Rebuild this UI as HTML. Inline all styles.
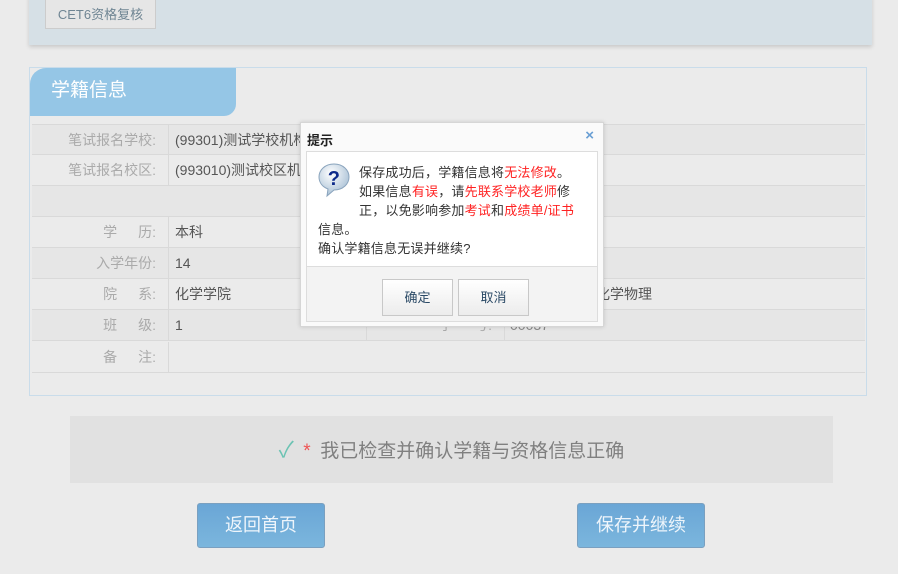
<!DOCTYPE html>
<html><head><meta charset="utf-8"><style>
*{margin:0;padding:0;box-sizing:border-box}
body{width:898px;height:574px;background:#ebebeb;font-family:"Liberation Sans","Noto Sans CJK SC",sans-serif;position:relative;overflow:hidden;color:#666}
.abs{position:absolute}
.top{left:29px;top:-5px;width:843px;height:50px;background:#d6e0e6;box-shadow:0 2px 4px rgba(0,0,0,.15)}
.cet{left:45px;top:0;width:111px;height:29px;border:1px solid #ccc;border-top:none;background:#e6e6e6;color:#6f8593;font-size:13px;line-height:29px;text-align:center}
.panel{left:29px;top:67px;width:838px;height:329px;border:1px solid #c9dcea;background:#ebebeb}
.tab{left:30px;top:68px;width:206px;height:48px;background:#95c6e6;border-radius:16px 0 12px 0;color:#fff;font-size:19px;line-height:46px;padding-left:21px}
.row{left:32px;width:833px;height:31px;border-bottom:1px solid #d9d9d9;font-size:14px;line-height:31px}
.lab{position:absolute;left:0;width:137px;height:100%;border-right:1px solid #d9d9d9;text-align:right;padding-right:12px;color:#aaa}
.val{position:absolute;left:143px;color:#555}
.mid{position:absolute;left:334px;width:139px;height:100%;border-left:1px solid #d9d9d9;border-right:1px solid #d9d9d9;text-align:right;padding-right:12px;color:#aaa}
.confirm{left:70px;top:416px;width:763px;height:67px;background:#e1e1e1;font-size:19px;line-height:67px;text-align:center;color:#808080}
.btn{top:503px;width:128px;height:45px;background:linear-gradient(#6aa6d6,#7bb6dd);border:1px solid #7aa0c0;border-radius:3px;color:#eef5fb;font-size:18px;line-height:43px;text-align:center}
.dlg{left:300px;top:122px;width:304px;height:205px;background:#fafafa;border:1px solid #d6d6d6;box-shadow:0 0 4px rgba(0,0,0,.15)}
.dt{left:6px;top:7px;font-size:13px;font-weight:bold;color:#222}
.dx{right:9px;top:4px;font-size:15px;color:#6a9fd4;font-weight:bold}
.db{left:5px;top:28px;width:292px;height:116px;background:#fff;border:1px solid #ddd;border-bottom:none;font-size:13px;color:#333;line-height:19px;letter-spacing:0.2px}
.dbtm{left:5px;top:143px;width:292px;height:56px;background:#f3f3f3;border:1px solid #ddd}
.b2{top:12px;width:71px;height:37px;border:1px solid #c8c8c8;background:linear-gradient(#fff,#ececec);font-size:13px;line-height:35px;text-align:center;color:#2b4a66}
.r{color:#f22}
</style></head><body>
<div class="abs top"></div>
<div class="abs cet">CET6资格复核</div>
<div class="abs panel"></div>
<div class="abs tab">学籍信息</div>

<div class="abs row" style="top:124px;background:#e6e6e6;border-top:1px solid #d9d9d9"><div class="lab">笔试报名学校:</div><div class="val">(99301)测试学校机构</div></div>
<div class="abs row" style="top:155px"><div class="lab">笔试报名校区:</div><div class="val">(993010)测试校区机构</div></div>
<div class="abs row" style="top:186px;background:#e6e6e6"></div>
<div class="abs row" style="top:217px"><div class="lab">学&emsp;&ensp;历:</div><div class="val">本科</div></div>
<div class="abs row" style="top:248px;background:#e6e6e6"><div class="lab">入学年份:</div><div class="val">14</div></div>
<div class="abs row" style="top:279px"><div class="lab">院&emsp;&ensp;系:</div><div class="val">化学学院</div><div class="val" style="left:564px">化学物理</div></div>
<div class="abs row" style="top:310px;background:#e6e6e6"><div class="lab">班&emsp;&ensp;级:</div><div class="val">1</div><div class="mid">学&emsp;&ensp;号:</div><div class="val" style="left:478px;color:#888">00037</div></div>
<div class="abs row" style="top:342px"><div class="lab">备&emsp;&ensp;注:</div></div>

<div class="abs confirm"><span style="color:#6cc3b3;font-size:22px">✓</span>&ensp;<span style="color:#e55">*</span>&ensp;我已检查并确认学籍与资格信息正确</div>
<div class="abs btn" style="left:197px">返回首页</div>
<div class="abs btn" style="left:577px">保存并继续</div>

<div class="abs dlg">
<div class="abs dt">提示</div>
<div class="abs dx">×</div>
<div class="abs db">
<svg class="abs" style="left:10px;top:10px" width="34" height="36" viewBox="0 0 34 36"><defs><radialGradient id="g" cx=".4" cy=".3" r=".8"><stop offset="0" stop-color="#fff"/><stop offset="1" stop-color="#9cb7cf"/></radialGradient></defs><path d="M17 2C8 2 2 8 2 15c0 6 4 10 9 12l-1 7 7-6c9 0 15-6 15-13S26 2 17 2z" fill="url(#g)" stroke="#8aa4bd"/><text x="17" y="23" text-anchor="middle" font-size="20" font-weight="bold" fill="#0d2a8a" font-family="Liberation Sans">?</text></svg>
<div class="abs" style="left:52px;top:11px;width:218px">保存成功后，学籍信息将<span class="r">无法修改</span>。<br>如果信息<span class="r">有误</span>，请<span class="r">先联系学校老师</span>修<br>正，以免影响参加<span class="r">考试</span>和<span class="r">成绩单/证书</span></div>
<div class="abs" style="left:11px;top:68px">信息。<br>确认学籍信息无误并继续?</div>
</div>
<div class="abs dbtm">
<div class="abs b2" style="left:75px">确定</div>
<div class="abs b2" style="left:151px">取消</div>
</div>
</div>
</body></html>
